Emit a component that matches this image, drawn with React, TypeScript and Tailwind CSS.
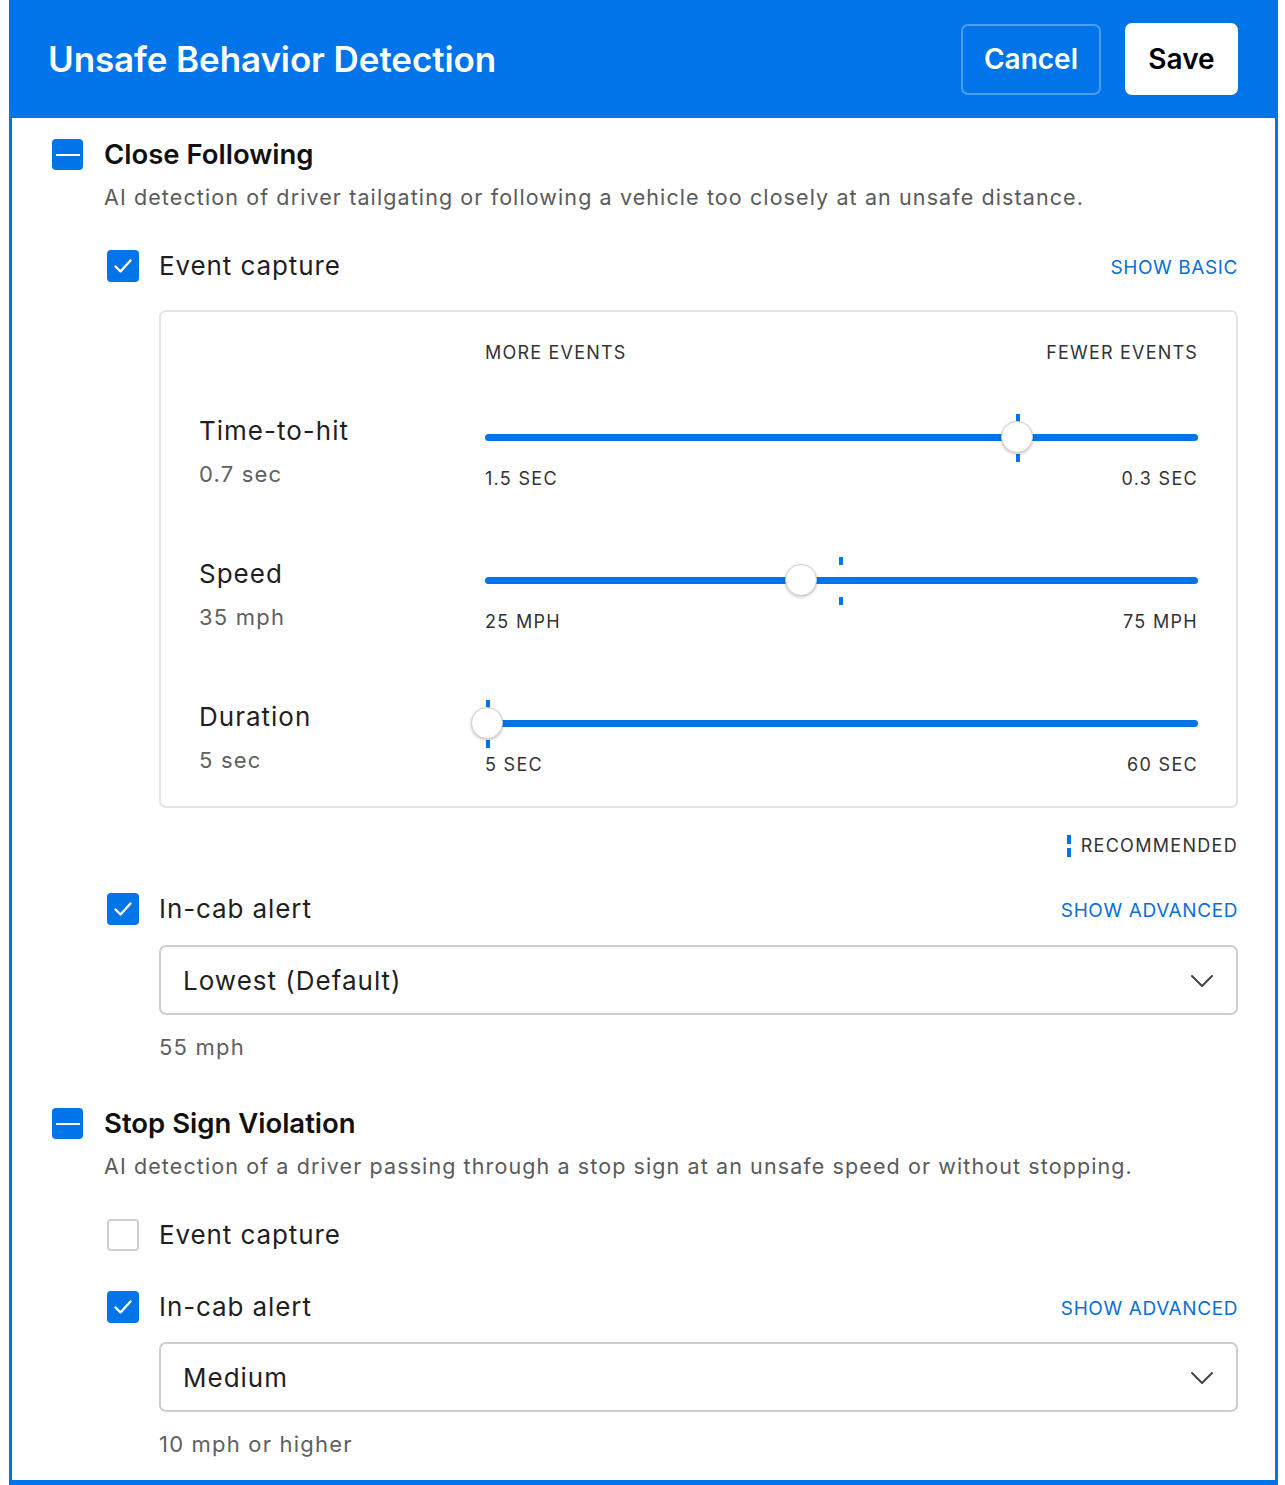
import React from "react";

function MinusBox() {
  return (
    <div className="w-[31px] h-[31px] rounded-[4px] bg-[#0074e8] flex items-center justify-center shrink-0">
      <div className="w-[24px] h-[2px] bg-white" />
    </div>
  );
}

function CheckBox({ checked }: { checked: boolean }) {
  if (!checked) {
    return <div className="w-[32px] h-[32px] rounded-[4px] border-2 border-[#cfcfcf] bg-white shrink-0" />;
  }
  return (
    <div className="w-[32px] h-[32px] rounded-[4px] bg-[#0074e8] flex items-center justify-center shrink-0">
      <svg width="32" height="32" viewBox="0 0 32 32" fill="none">
        <path d="M8.5 16.5 L13.5 21.5 L23.5 10.5" stroke="white" strokeWidth="2.4" strokeLinecap="round" strokeLinejoin="round" />
      </svg>
    </div>
  );
}

function Chevron() {
  return (
    <svg width="24" height="16" viewBox="0 0 24 16" fill="none">
      <path d="M2 3 L12 13 L22 3" stroke="#444" strokeWidth="2" strokeLinecap="round" strokeLinejoin="round" />
    </svg>
  );
}

function SubRow({ checked, label, link }: { checked: boolean; label: string; link?: string }) {
  return (
    <div className="ml-[55px] h-[32px] flex items-center">
      <CheckBox checked={checked} />
      <div className="ml-[20px] text-[26px] leading-[32px] tracking-[0.9px] text-[#1f1f1f]">{label}</div>
      {link ? (
        <div className="ml-auto text-[19px] leading-[24px] tracking-[0.6px] text-[#0b6fd9] mt-[4px]">{link}</div>
      ) : null}
    </div>
  );
}

function SelectBox({ value }: { value: string }) {
  return (
    <div className="ml-[107px] h-[70px] rounded-[7px] border-2 border-[#cdcdcd] flex items-center pl-[22px] pr-[22px]">
      <div className="text-[26px] tracking-[1px] text-[#1f1f1f]">{value}</div>
      <div className="ml-auto mt-[2px]">
        <Chevron />
      </div>
    </div>
  );
}

function Tick({ left }: { left: number }) {
  return (
    <>
      <div className="absolute w-[4px] h-[8px] bg-[#0074e8] top-[1px]" style={{ left: left - 2 }} />
      <div className="absolute w-[4px] h-[8px] bg-[#0074e8] top-[41px]" style={{ left: left - 2 }} />
    </>
  );
}

function SliderRow({
  label,
  value,
  thumb,
  tick,
  min,
  max,
  first,
}: {
  label: string;
  value: string;
  thumb: number;
  tick: number;
  min: string;
  max: string;
  first?: boolean;
}) {
  return (
    <div className={"flex " + (first ? "mt-[48px]" : "mt-[65px]")}>
      <div className="w-[286px] shrink-0">
        <div className="text-[26px] leading-[36px] tracking-[1px] text-[#1f1f1f]">{label}</div>
        <div className="text-[22px] leading-[30px] mt-[10px] tracking-[1.2px] text-[#5f5f5f]">{value}</div>
      </div>
      <div className="flex-1">
        <div className="relative h-[50px]">
          <div className="absolute left-0 right-0 top-[21px] h-[7px] rounded-full bg-[#0074e8]" />
          <Tick left={tick} />
          <div
            className="absolute top-[8px] w-[32px] h-[32px] rounded-full bg-white border border-[#cfcfcf] shadow-[0_1px_3px_rgba(0,0,0,0.25)]"
            style={{ left: thumb - 16 }}
          />
        </div>
        <div className="flex justify-between mt-[4px] text-[18px] leading-[24px] tracking-[1.3px] text-[#333]">
          <span>{min}</span>
          <span>{max}</span>
        </div>
      </div>
    </div>
  );
}

export default function App() {
  return (
    <div className="min-h-screen bg-white pl-[9px]" style={{ fontFamily: "Inter, 'Noto Sans', sans-serif" }}>
      <div className="w-[1269px]">
        <div className="h-[118px] bg-[#0074e8] flex items-center pl-[39px] pr-[40px]">
          <div className="text-[35px] font-semibold text-white tracking-[-0.1px]">Unsafe Behavior Detection</div>
          <div className="ml-auto flex items-center gap-[24px]">
            <div className="w-[140px] h-[71px] rounded-[7px] border-2 border-[#4d9ef0] flex items-center justify-center text-[28px] font-semibold text-white">
              Cancel
            </div>
            <div className="w-[113px] h-[72px] rounded-[7px] bg-white flex items-center justify-center text-[28px] font-semibold text-black">
              Save
            </div>
          </div>
        </div>
        <div className="border-x-[3px] border-b-[5px] border-[#0074e8] pl-[40px] pr-[37px] pt-[21px] pb-[21px]">
          {/* Close Following */}
          <div className="h-[31px] flex items-center">
            <MinusBox />
            <div className="ml-[21px] text-[27.5px] font-semibold text-[#111]">Close Following</div>
          </div>
          <div className="ml-[52px] mt-[11px] text-[21.5px] leading-[32px] text-[#5a5a5a] tracking-[1.1px]">
            AI detection of driver tailgating or following a vehicle too closely at an unsafe distance.
          </div>
          <div className="mt-[37px]">
            <SubRow checked label="Event capture" link="SHOW BASIC" />
          </div>
          <div className="ml-[107px] mt-[28px] rounded-[7px] border-2 border-[#e4e4e4] pt-[29px] pb-[29px] px-[38px]">
            <div className="flex">
              <div className="w-[286px] shrink-0" />
              <div className="flex-1 flex justify-between text-[18px] leading-[24px] tracking-[1.2px] text-[#333]">
                <span>MORE EVENTS</span>
                <span>FEWER EVENTS</span>
              </div>
            </div>
            <SliderRow first label="Time-to-hit" value="0.7 sec" thumb={532} tick={533} min="1.5 SEC" max="0.3 SEC" />
            <SliderRow label="Speed" value="35 mph" thumb={316} tick={356} min="25 MPH" max="75 MPH" />
            <SliderRow label="Duration" value="5 sec" thumb={2} tick={3} min="5 SEC" max="60 SEC" />
          </div>
          <div className="mt-[26px] h-[24px] flex items-center justify-end">
            <div className="flex flex-col gap-[4px] mr-[10px]">
              <div className="w-[4px] h-[9px] bg-[#0074e8]" />
              <div className="w-[4px] h-[9px] bg-[#0074e8]" />
            </div>
            <div className="text-[18px] leading-[24px] tracking-[1.3px] text-[#333]">RECOMMENDED</div>
          </div>
          <div className="mt-[35px]">
            <SubRow checked label="In-cab alert" link="SHOW ADVANCED" />
          </div>
          <div className="mt-[20px]">
            <SelectBox value="Lowest (Default)" />
          </div>
          <div className="ml-[107px] mt-[17px] text-[22px] leading-[30px] tracking-[1.2px] text-[#5f5f5f]">55 mph</div>

          {/* Stop Sign Violation */}
          <div className="mt-[46px] h-[31px] flex items-center">
            <MinusBox />
            <div className="ml-[21px] text-[27.5px] font-semibold text-[#111]">Stop Sign Violation</div>
          </div>
          <div className="ml-[52px] mt-[11px] text-[21.5px] leading-[32px] text-[#5a5a5a] tracking-[1.1px]">
            AI detection of a driver passing through a stop sign at an unsafe speed or without stopping.
          </div>
          <div className="mt-[37px]">
            <SubRow checked={false} label="Event capture" />
          </div>
          <div className="mt-[40px]">
            <SubRow checked label="In-cab alert" link="SHOW ADVANCED" />
          </div>
          <div className="mt-[19px]">
            <SelectBox value="Medium" />
          </div>
          <div className="ml-[107px] mt-[17px] text-[22px] leading-[30px] tracking-[1.2px] text-[#5f5f5f]">10 mph or higher</div>
        </div>
      </div>
    </div>
  );
}
